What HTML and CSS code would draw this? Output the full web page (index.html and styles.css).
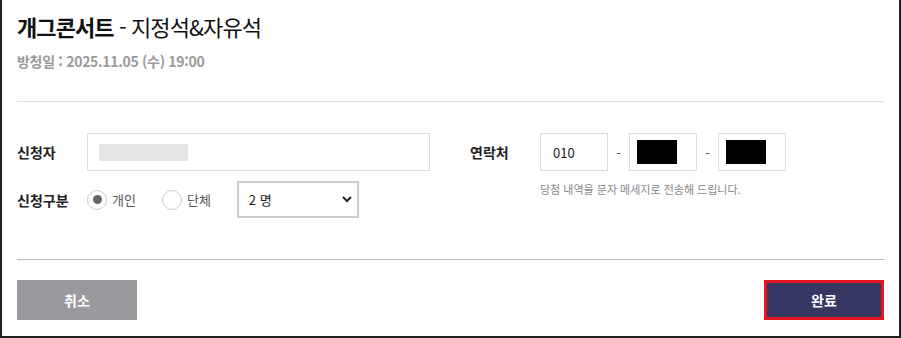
FILE: index.html
```html
<!DOCTYPE html>
<html lang="ko">
<head>
  <meta charset="UTF-8" />
  <title>개그콘서트 방청 신청</title>
  <link rel="stylesheet" href="styles.css">
</head>
<body>
  <div class="modal">
    <!-- Title -->
    <div class="head">
      <h1><b>개그콘서트</b> - 지정석&amp;자유석</h1>
      <p class="date">방청일 : 2025.11.05 (수) 19:00</p>
    </div>

    <!-- Form -->
    <div class="form">
      <div class="col col-left">
        <div class="row">
          <span class="label">신청자</span>
          <div class="input name-input"><span class="blur"></span></div>
        </div>
        <div class="row">
          <span class="label">신청구분</span>
          <label class="radio checked"><span class="dot"></span>개인</label>
          <label class="radio"><span class="dot"></span>단체</label>
          <div class="select-box">
            <select>
              <option>2 명</option>
            </select>
            <svg class="chevron" width="10" height="7" viewBox="0 0 10 7">
              <path d="M1 1 L5 5 L9 1" fill="none" stroke="#222" stroke-width="2"/>
            </svg>
          </div>
        </div>
      </div>

      <div class="col col-right">
        <div class="row">
          <span class="label">연락처</span>
          <div class="input phone">010</div>
          <span class="dash">-</span>
          <div class="input phone"><span class="mask"></span></div>
          <span class="dash">-</span>
          <div class="input phone"><span class="mask"></span></div>
        </div>
        <p class="note">당첨 내역을 문자 메세지로 전송해 드립니다.</p>
      </div>
    </div>

    <!-- Buttons -->
    <div class="actions">
      <button class="btn cancel">취소</button>
      <button class="btn done">완료</button>
    </div>
  </div>
</body>
</html>
```

FILE: styles.css
```css
body {
  margin: 0;
  font-family: "Noto Sans CJK KR", "Noto Sans", sans-serif;
  background: #fff;
  color: #222;
}

.modal {
  box-sizing: border-box;
  width: 901px;
  height: 338px;
  border: 2px solid #222;
  border-top: none;
  padding: 0 15px;
}

.head {
  padding-top: 10px;
  padding-bottom: 29px;
  border-bottom: 1px solid #ddd;
}

h1 {
  margin: 0;
  font-size: 22px;
  font-weight: normal;
  line-height: 32px;
  color: #111;
  letter-spacing: -0.9px;
}

h1 b {
  font-weight: bold;
}

.date {
  margin: 8px 0 0;
  font-size: 14px;
  font-weight: bold;
  color: #999;
  line-height: 22px;
  letter-spacing: -0.3px;
}

.form {
  display: flex;
  gap: 40px;
  padding: 31px 0 41px;
  border-bottom: 1px solid #bbb;
}

.col {
  display: flex;
  flex-direction: column;
  gap: 10px;
}

.row {
  display: flex;
  align-items: center;
}

.label {
  width: 70px;
  font-size: 14px;
  font-weight: bold;
  color: #222;
}

.input {
  box-sizing: border-box;
  height: 38px;
  border: 1px solid #ddd;
  display: flex;
  align-items: center;
  font-size: 13px;
  color: #222;
}

.name-input {
  width: 343px;
  padding-left: 11px;
}

.blur {
  width: 89px;
  height: 17px;
  background: #e5e5e5;
}

.radio {
  display: flex;
  align-items: center;
  gap: 5px;
  font-size: 13px;
  color: #555;
  margin-right: 26px;
}

.radio .dot {
  box-sizing: border-box;
  width: 20px;
  height: 20px;
  border: 1px solid #ccc;
  border-radius: 50%;
  display: flex;
  align-items: center;
  justify-content: center;
}

.radio.checked .dot::after {
  content: "";
  width: 9px;
  height: 9px;
  border-radius: 50%;
  background: #666;
}

.select-box {
  position: relative;
}

.select-box select {
  appearance: none;
  box-sizing: border-box;
  width: 122px;
  height: 37px;
  border: 2px solid #ccc;
  background: #fff;
  padding: 0 10px;
  font-family: inherit;
  font-size: 13px;
  color: #222;
}

.chevron {
  position: absolute;
  right: 7px;
  top: 15px;
}

.phone {
  width: 68px;
  padding-left: 12px;
}

.dash {
  width: 21px;
  text-align: center;
  font-size: 13px;
  color: #555;
}

.mask {
  width: 40px;
  height: 24px;
  background: #000;
  margin-left: -5px;
}

.note {
  margin: 0 0 0 70px;
  font-size: 11px;
  color: #888;
}

.actions {
  display: flex;
  justify-content: space-between;
  padding-top: 20px;
}

.btn {
  box-sizing: border-box;
  width: 120px;
  height: 40px;
  border: none;
  font-family: inherit;
  font-size: 14px;
  font-weight: bold;
  color: #fff;
}

.cancel {
  background: #999a9e;
}

.done {
  background: #363763;
  border: 3px solid #e4151f;
}
```
